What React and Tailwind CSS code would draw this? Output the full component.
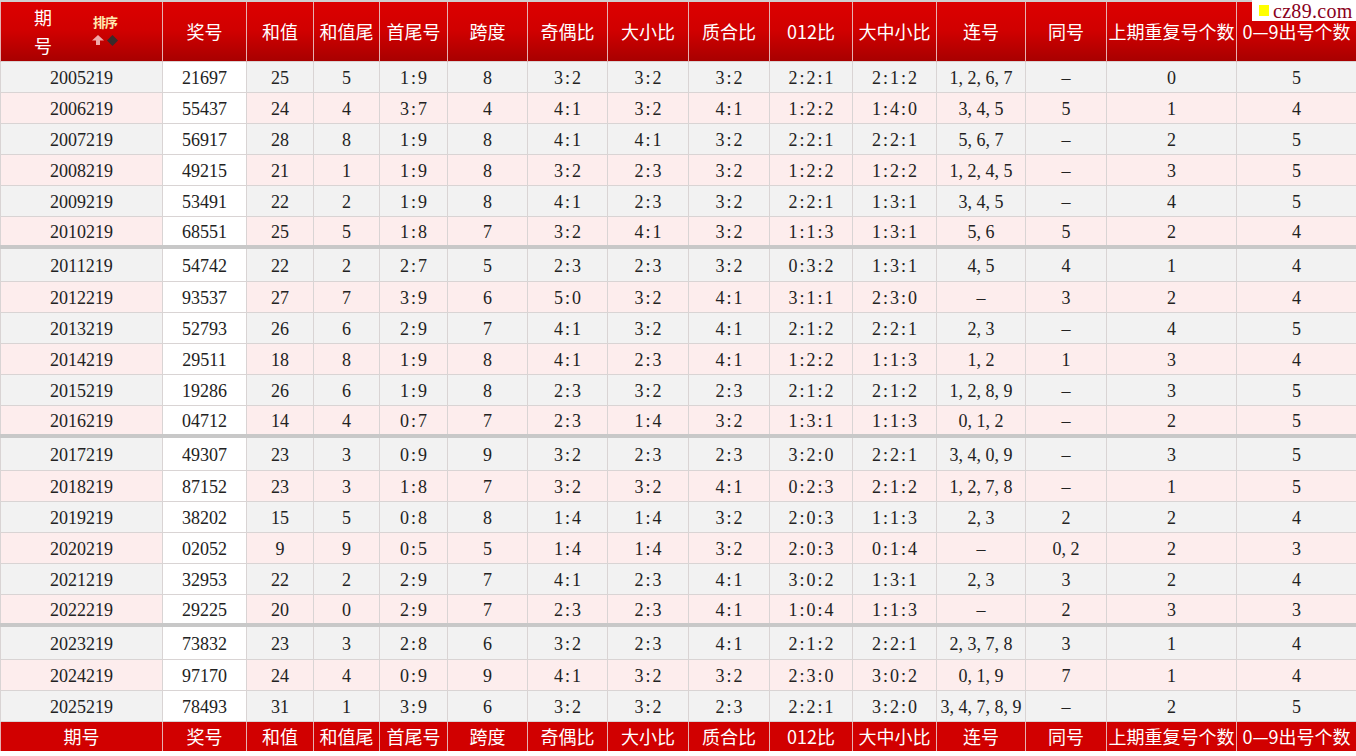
const cols = [162, 84, 67, 66, 68, 80, 80, 81, 81, 83, 84, 89, 81, 130, 120];

const labels = [
  "期号", "奖号", "和值", "和值尾", "首尾号", "跨度", "奇偶比", "大小比", "质合比",
  "012比", "大中小比", "连号", "同号", "上期重复号个数", "0—9出号个数",
];

const raw = `2005219 21697 25 5 1:9 8 3:2 3:2 3:2 2:2:1 2:1:2 1,2,6,7 - 0 5
2006219 55437 24 4 3:7 4 4:1 3:2 4:1 1:2:2 1:4:0 3,4,5 5 1 4
2007219 56917 28 8 1:9 8 4:1 4:1 3:2 2:2:1 2:2:1 5,6,7 - 2 5
2008219 49215 21 1 1:9 8 3:2 2:3 3:2 1:2:2 1:2:2 1,2,4,5 - 3 5
2009219 53491 22 2 1:9 8 4:1 2:3 3:2 2:2:1 1:3:1 3,4,5 - 4 5
2010219 68551 25 5 1:8 7 3:2 4:1 3:2 1:1:3 1:3:1 5,6 5 2 4
2011219 54742 22 2 2:7 5 2:3 2:3 3:2 0:3:2 1:3:1 4,5 4 1 4
2012219 93537 27 7 3:9 6 5:0 3:2 4:1 3:1:1 2:3:0 - 3 2 4
2013219 52793 26 6 2:9 7 4:1 3:2 4:1 2:1:2 2:2:1 2,3 - 4 5
2014219 29511 18 8 1:9 8 4:1 2:3 4:1 1:2:2 1:1:3 1,2 1 3 4
2015219 19286 26 6 1:9 8 2:3 3:2 2:3 2:1:2 2:1:2 1,2,8,9 - 3 5
2016219 04712 14 4 0:7 7 2:3 1:4 3:2 1:3:1 1:1:3 0,1,2 - 2 5
2017219 49307 23 3 0:9 9 3:2 2:3 2:3 3:2:0 2:2:1 3,4,0,9 - 3 5
2018219 87152 23 3 1:8 7 3:2 3:2 4:1 0:2:3 2:1:2 1,2,7,8 - 1 5
2019219 38202 15 5 0:8 8 1:4 1:4 3:2 2:0:3 1:1:3 2,3 2 2 4
2020219 02052 9 9 0:5 5 1:4 1:4 3:2 2:0:3 0:1:4 - 0,2 2 3
2021219 32953 22 2 2:9 7 4:1 2:3 4:1 3:0:2 1:3:1 2,3 3 2 4
2022219 29225 20 0 2:9 7 2:3 2:3 4:1 1:0:4 1:1:3 - 2 3 3
2023219 73832 23 3 2:8 6 3:2 2:3 4:1 2:1:2 2:2:1 2,3,7,8 3 1 4
2024219 97170 24 4 0:9 9 4:1 3:2 3:2 2:3:0 3:0:2 0,1,9 7 1 4
2025219 78493 31 1 3:9 6 3:2 3:2 2:3 2:2:1 3:2:0 3,4,7,8,9 - 2 5`;

const rows = raw.split("\n").map((line) =>
  line.split(" ").map((v) => (v === "-" ? "–" : v.replace(/,/g, ", ")))
);

const serif = { fontFamily: '"Liberation Serif", "Noto Sans CJK SC", serif' };

// SimSun style colon: half-width cell with the dots centred
function Cell({ value }) {
  const parts = value.split(":");
  return parts.map((p, i) => (
    <span key={i}>
      {i > 0 && <span className="inline-block w-[0.5em] text-center">:</span>}
      {p}
    </span>
  ));
}

function SortIcon() {
  return (
    <div className="flex flex-col items-center leading-none">
      <span className="text-[13px] font-bold tracking-[-1px] text-[#ffe9b0]">排序</span>
      <div className="mt-[7px] flex items-center gap-[3px]">
        <svg width="12" height="10" viewBox="0 0 12 10">
          <path d="M6 0 L12 5.5 L8 5.5 L8 10 L4 10 L4 5.5 L0 5.5 Z" fill="#f0a8a8" />
        </svg>
        <svg width="11" height="11" viewBox="0 0 10 10">
          <path d="M5 0 L10 5 L5 10 L0 5 Z" fill="#3a2a2a" />
        </svg>
      </div>
    </div>
  );
}

export default function App() {
  return (
    <div
      className="relative h-[756px] w-[1356px] overflow-hidden bg-white text-[#222]"
      style={{ fontFamily: '"Noto Sans CJK SC", "Liberation Sans", sans-serif' }}
    >
      <div className="absolute right-0 top-0 z-10 flex h-[21px] w-[104px] items-center gap-[4px] bg-white pl-[7px]">
        <span className="block h-[11px] w-[10px] shrink-0 bg-[#ffff00]" />
        <span className="text-[20px] leading-none tracking-[0.3px] text-[#8a0020]" style={serif}>cz89.com</span>
      </div>
      <table className="table-fixed border-collapse border-t-2 border-[#cfcfcf]" style={{ width: 1356 }}>
        <colgroup>
          {cols.map((w, i) => (
            <col key={i} style={{ width: w }} />
          ))}
        </colgroup>
        <thead>
          <tr className="h-[60px] bg-gradient-to-b from-[#dd0000] via-[#d00000] to-[#a80000] text-white">
            <th className="border-x border-[#e6b0b0] p-0 font-normal">
              <div className="flex items-center">
                <div className="ml-[33px] flex flex-col text-[18px] leading-[28px]">
                  <span>期</span>
                  <span>号</span>
                </div>
                <div className="ml-[40px] mt-[-2px]">
                  <SortIcon />
                </div>
              </div>
            </th>
            {labels.slice(1).map((l, i) => (
              <th
                key={i}
                className="whitespace-nowrap border-x border-[#e6b0b0] p-0 text-[18px] font-normal"
              >
                {l}
              </th>
            ))}
          </tr>
        </thead>
        <tbody style={serif}>
          {rows.map((r, ri) => {
            const sep = ri > 0 && ri % 6 === 0;
            const bg = ri % 2 === 0 ? "bg-[#f2f2f2]" : "bg-[#fdeded]";
            return (
              <tr key={ri} className={bg}>
                {r.map((v, ci) => (
                  <td
                    key={ci}
                    className={`whitespace-nowrap border border-[#d9d4d4] p-0 pt-[3px] text-center text-[18px] leading-[20px] ${
                      sep ? "h-[34px] border-t-[4px] border-t-[#c8c8c8]" : "h-[31px]"
                    } ${ci === 1 ? "bg-white" : ""}`}
                  >
                    <Cell value={v} />
                  </td>
                ))}
              </tr>
            );
          })}
        </tbody>
        <tfoot>
          <tr className="h-[30px] bg-[#d10000] text-white">
            {labels.map((l, i) => (
              <td
                key={i}
                className="whitespace-nowrap border-x border-[#e6b0b0] p-0 text-center text-[18px]"
              >
                {l}
              </td>
            ))}
          </tr>
        </tfoot>
      </table>
    </div>
  );
}
